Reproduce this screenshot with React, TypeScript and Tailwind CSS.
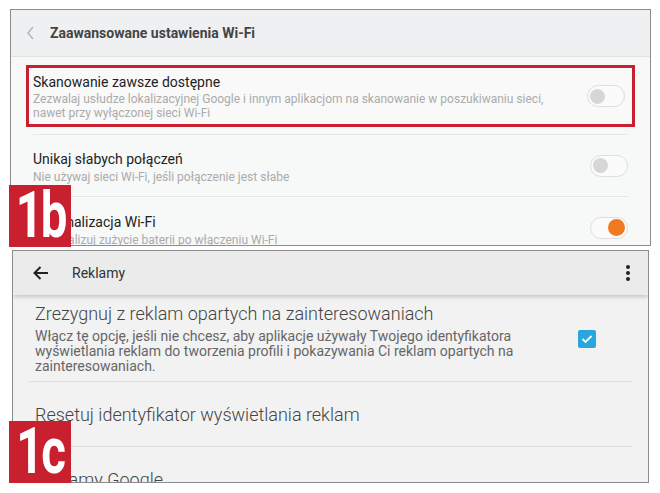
import React from 'react';

const Toggle = ({ on }: { on?: boolean }) => (
  <div className="w-[38px] h-[22px] rounded-full border border-[#dedede] bg-[#fbfbfb] flex items-center px-[2px] shrink-0"
    style={{ justifyContent: on ? 'flex-end' : 'flex-start' }}>
    <div className={on ? 'w-[17px] h-[17px] rounded-full bg-[#f07a22]' : 'w-[15px] h-[15px] rounded-full bg-[#d6d6d6]'} />
  </div>
);

const Badge = ({ label }: { label: string }) => (
  <div className="absolute left-[-2px] w-[62px] h-[62px] bg-[#c8202f] flex items-center justify-center">
    <span className="block text-white font-bold text-[64px] leading-[62px] tracking-[-3px] scale-x-[0.74]"
      style={{ fontFamily: 'Roboto, "Noto Sans", sans-serif' }}>
      {label}
    </span>
  </div>
);

export default function App() {
  return (
    <div className="w-[660px] h-[493px] bg-white relative" style={{ fontFamily: 'Roboto, "Noto Sans", sans-serif' }}>
      {/* 1b */}
      <div className="pt-[9px] pl-[10px]">
        <div className="relative w-[641px] h-[237px] border border-[#8c8c8c] bg-[#f7f8f8] overflow-hidden">
          <div className="h-[47px] bg-[#eff0f2] border-b border-[#e2e3e5] flex items-center pl-[14px]">
            <svg width="12" height="16" viewBox="0 0 12 16" fill="none" stroke="#b3b3b3" strokeWidth="1.4">
              <polyline points="8,2 3,8 8,14" />
            </svg>
            <span className="ml-[13px] text-[14px] font-bold text-[#444]">Zaawansowane ustawienia Wi-Fi</span>
          </div>
          <div className="px-[15px] pt-[8px]">
            <div className="border-[3px] border-[#c8202f] flex items-center pl-[4px] pr-[7px] py-[4px] bg-[#f9f9f9]">
              <div className="flex-1">
                <div className="text-[14px] leading-[20px] text-[#222]">Skanowanie zawsze dostępne</div>
                <div className="text-[12px] leading-[14px] text-[#ababab]">
                  Zezwalaj usłudze lokalizacyjnej Google i innym aplikacjom na skanowanie w poszukiwaniu sieci,<br />
                  nawet przy wyłączonej sieci Wi-Fi
                </div>
              </div>
              <Toggle />
            </div>
            <div className="mx-[7px] mt-[7px] border-t border-[#e6e6e6] h-[62px] flex items-center">
              <div className="flex-1 pt-[2px]">
                <div className="text-[14px] leading-[20px] text-[#222]">Unikaj słabych połączeń</div>
                <div className="text-[12px] leading-[16px] text-[#ababab]">Nie używaj sieci Wi-Fi, jeśli połączenie jest słabe</div>
              </div>
              <Toggle />
            </div>
            <div className="mx-[7px] border-t border-[#e6e6e6] h-[62px] flex items-center">
              <div className="flex-1 pt-[4px]">
                <div className="text-[14px] leading-[20px] text-[#222]">Optymalizacja Wi-Fi</div>
                <div className="text-[12px] leading-[16px] text-[#ababab]">Optymalizuj zużycie baterii po włączeniu Wi-Fi</div>
              </div>
              <Toggle on />
            </div>
          </div>
        </div>
      </div>
      <div className="absolute left-[11px] top-[185px]"><Badge label="1b" /></div>

      {/* 1c */}
      <div className="pt-[4px] pl-[12px]">
        <div className="relative w-[637px] h-[233px] border border-[#8c8c8c] bg-[#f2f2f2] overflow-hidden">
          <div className="h-[44px] bg-[#ebebeb] flex items-center pl-[20px] pr-[18px] shadow-[0_2px_4px_rgba(0,0,0,0.18)] relative">
            <svg width="16" height="14" viewBox="0 0 16 14" fill="none" stroke="#222" strokeWidth="2">
              <line x1="1.5" y1="7" x2="15" y2="7" />
              <polyline points="7.5,1 1.5,7 7.5,13" />
            </svg>
            <span className="ml-[23px] text-[14px] text-[#333] flex-1">Reklamy</span>
            <div className="flex flex-col gap-[2px] items-center">
              <div className="w-[4px] h-[4px] rounded-full bg-[#222]" />
              <div className="w-[4px] h-[4px] rounded-full bg-[#222]" />
              <div className="w-[4px] h-[4px] rounded-full bg-[#222]" />
            </div>
          </div>
          <div className="px-[16px]">
            <div className="flex items-center pl-[6px] pr-[36px] pt-[8px] pb-[7px] border-b border-[#e0e0e0]">
              <div className="flex-1">
                <div className="text-[18px] leading-[22px] font-light text-[#444]">Zrezygnuj z reklam opartych na zainteresowaniach</div>
                <div className="text-[14px] leading-[15px] text-[#666] mt-[4px]">
                  Włącz tę opcję, jeśli nie chcesz, aby aplikacje używały Twojego identyfikatora<br />
                  wyświetlania reklam do tworzenia profili i pokazywania Ci reklam opartych na<br />
                  zainteresowaniach.
                </div>
              </div>
              <div className="w-[18px] h-[18px] rounded-[2px] bg-[#2aa6df] flex items-center justify-center">
                <svg width="12" height="10" viewBox="0 0 12 10" fill="none" stroke="white" strokeWidth="1.8">
                  <polyline points="1.5,5 4.5,8 10.5,2" />
                </svg>
              </div>
            </div>
            <div className="h-[65px] flex items-center pl-[6px] border-b border-[#e0e0e0]">
              <span className="text-[18px] font-light text-[#444]">Resetuj identyfikator wyświetlania reklam</span>
            </div>
            <div className="pl-[6px] pt-[19px]">
              <span className="text-[18px] font-light text-[#444]">Reklamy Google</span>
            </div>
          </div>
        </div>
      </div>
      <div className="absolute left-[11px] top-[421px]"><Badge label="1c" /></div>
    </div>
  );
}
